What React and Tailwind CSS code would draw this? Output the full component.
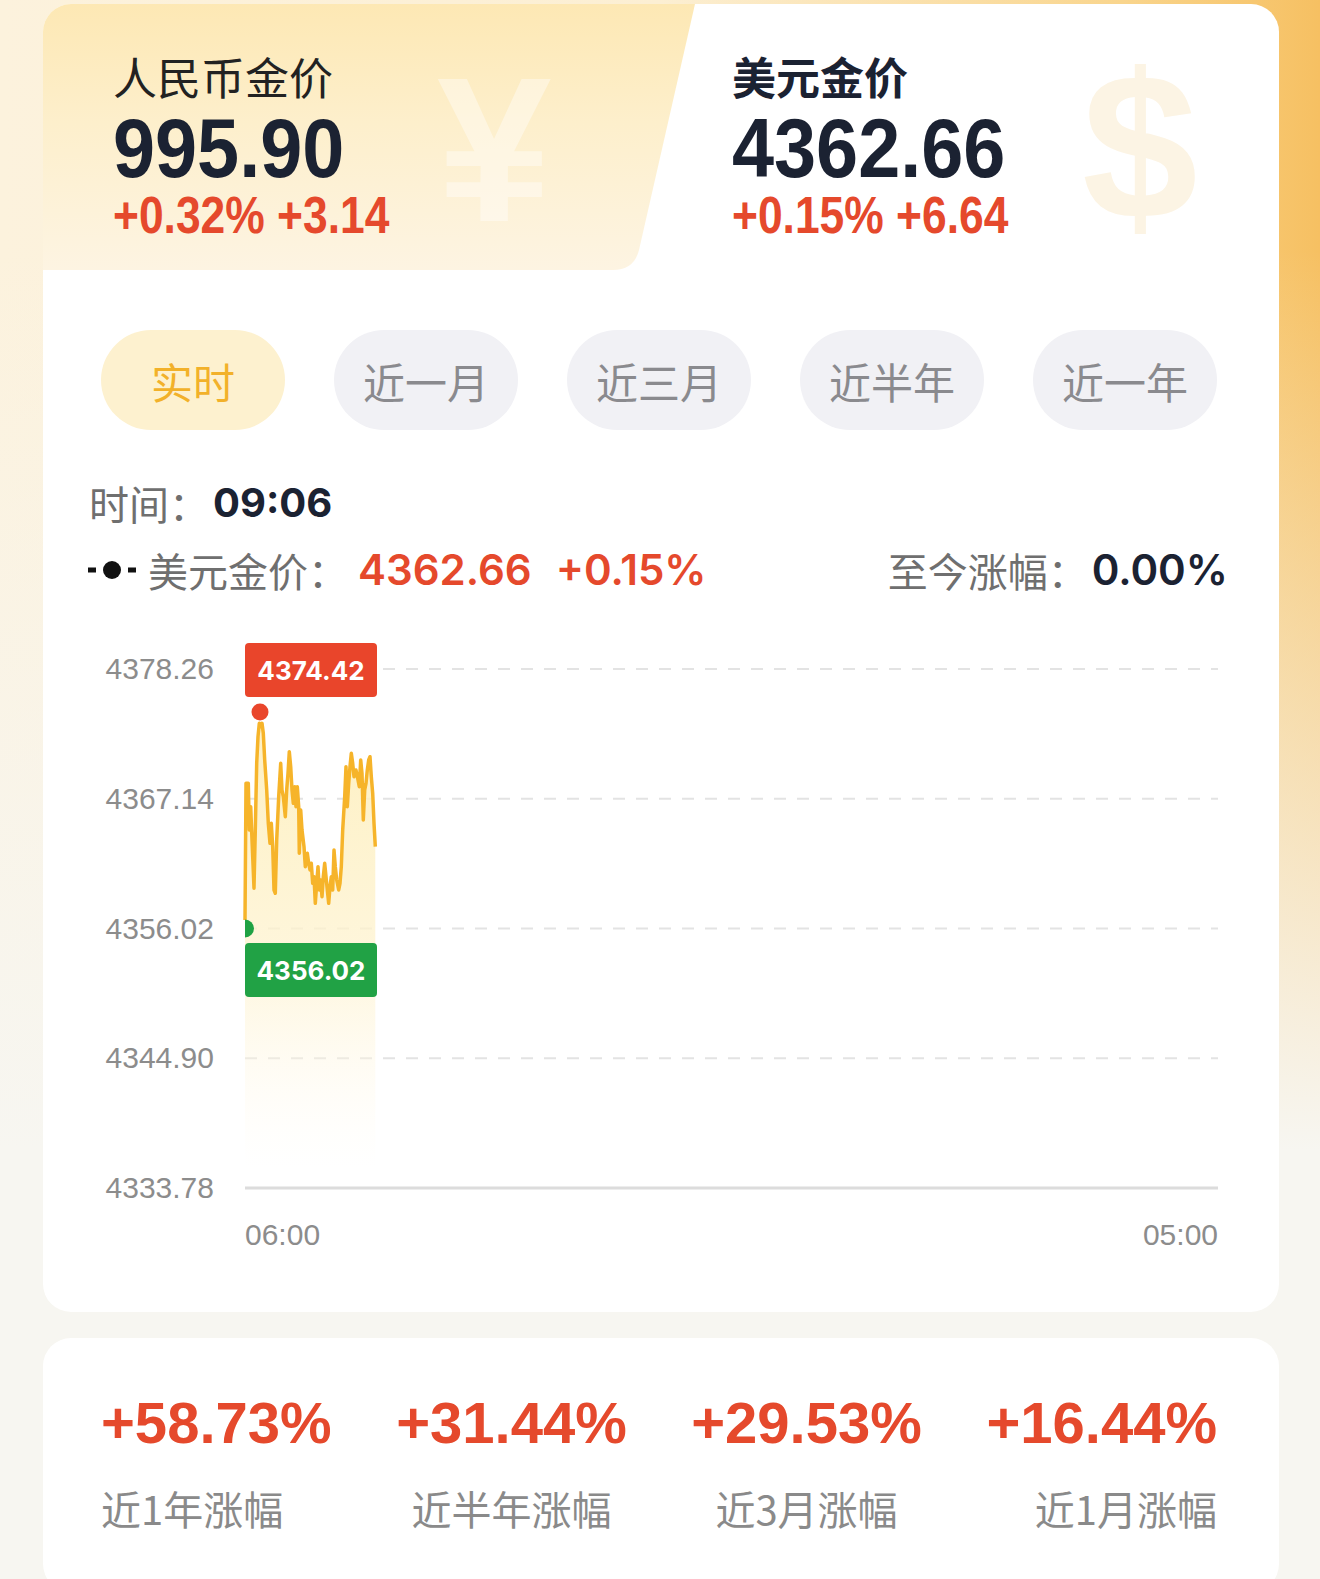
import React from "react";

const CJK = "font-['Noto_Sans_CJK_SC',sans-serif]";
const NUM = "font-['Liberation_Sans','Noto_Sans_CJK_SC',sans-serif]";
const INTER = "font-['Inter','Noto_Sans_CJK_SC',sans-serif]";
const LIB = "font-['Liberation_Sans',sans-serif]";

const pts = [
  [0, 251], [1, 114.3], [3.3, 114.3], [4.3, 161], [5.7, 137.7], [7, 171], [9, 219.3], [10.3, 161],
  [11.7, 94.3], [13, 67.7], [14.3, 54.3], [15.7, 57.7], [17, 54.3], [18.3, 64.3], [19.7, 91],
  [21.7, 121], [23.3, 154.3], [25, 174.3], [26.3, 154.3], [27.7, 177.7], [29, 221], [30.3, 224.3],
  [31.7, 171], [33.7, 127.7], [35.7, 94.3], [37, 121], [38.3, 127.7], [40.3, 147.7], [41.7, 121],
  [43, 104.3], [44.3, 82.7], [45.7, 97.7], [47, 121], [48.3, 134.3], [49.7, 117.7], [51, 137.7],
  [52.3, 117.7], [53.7, 137.7], [54.3, 184.3], [55.7, 141], [57, 161], [59, 177.7], [60.3, 197.7],
  [62.3, 184.3], [63.7, 194.3], [65, 201], [66.3, 194.3], [67.7, 214.3], [69, 207.7], [70.3, 234.3],
  [71.7, 214.3], [73, 197.7], [74.3, 221], [75.7, 211], [77, 227.7], [78.3, 207.7], [79.7, 194.3],
  [81, 207.7], [82.3, 221], [83.7, 234.3], [85, 217.7], [86.3, 207.7], [87.7, 221], [89, 181],
  [90.3, 197.7], [91.7, 211], [93.7, 221], [95, 214.3], [96.3, 197.7], [97.7, 161], [99.7, 127.7],
  [101, 97.7], [102.3, 137.7], [103.7, 114.3], [105, 97.7], [106.3, 84.3], [107.7, 94.3], [109, 107.7],
  [111, 101], [113, 111], [114.3, 117.7], [115.7, 91], [117, 104.3], [118.3, 151], [119.7, 121],
  [121, 114.3], [122.3, 101], [123.7, 91], [125, 87.7], [126.3, 107.7], [127.7, 124.3], [129, 154.3],
  [130.3, 177.7],
];

const linePath = pts.map((p, i) => `${i ? "L" : "M"}${p[0]},${p[1]}`).join(" ");
const fillPath = `${linePath} L130.3,519 L0,519 Z`;

function Chart() {
  const rows = [0, 129.75, 259.5, 389.25];
  return (
    <div className="relative h-[519px] w-[973px]">
      <svg className="absolute inset-0 overflow-visible" width="973" height="519" viewBox="0 0 973 519">
        <defs>
          <linearGradient id="fillg" x1="0" y1="40" x2="0" y2="500" gradientUnits="userSpaceOnUse">
            <stop offset="0" stopColor="#fdedb6" stopOpacity="0.85" />
            <stop offset="0.55" stopColor="#fef3d0" stopOpacity="0.75" />
            <stop offset="1" stopColor="#fffaf0" stopOpacity="0" />
          </linearGradient>
        </defs>
        {rows.map((y) => (
          <line key={y} x1="0" x2="973" y1={y} y2={y} stroke="#e3e3e3" strokeWidth="2" strokeDasharray="12 11" />
        ))}
        <line x1="0" x2="973" y1="519" y2="519" stroke="#dcdcdc" strokeWidth="3" />
        <path d={fillPath} fill="url(#fillg)" />
        <path d={linePath} fill="none" stroke="#f6b42a" strokeWidth="3.5" strokeLinejoin="round" />
        <circle cx="15" cy="43" r="8.5" fill="#e9462c" />
        <path d="M0,250.5 A9,9 0 0 1 0,268.5 Z" fill="#1fa244" />
      </svg>
      <div className={`absolute left-0 top-[-26px] flex h-[54px] w-[132px] items-center justify-center rounded-[4px] bg-[#e9452b] text-[26px] font-bold text-white ${INTER}`}>
        4374.42
      </div>
      <div className={`absolute left-0 top-[274px] flex h-[54px] w-[132px] items-center justify-center rounded-[4px] bg-[#21a245] text-[26px] font-bold text-white ${INTER}`}>
        4356.02
      </div>
    </div>
  );
}

function Price({ title, titleBold, value, change }) {
  return (
    <>
      <div className={`relative text-[44px] leading-[52px] text-[#1b2232] ${titleBold ? "font-bold" : "text-[#222]"} ${CJK}`}>{title}</div>
      <div className={`relative mt-[2px] origin-left scale-x-[0.9] whitespace-nowrap text-[84px] font-bold leading-[88px] text-[#1b2232] ${NUM}`}>
        {value}
      </div>
      <div className={`relative origin-left scale-x-[0.87] whitespace-nowrap text-[51px] font-bold leading-[48px] text-[#e5492c] ${NUM}`}>
        {change}
      </div>
    </>
  );
}

export default function App() {
  const tabs = ["实时", "近一月", "近三月", "近半年", "近一年"];
  const yLabels = ["4378.26", "4367.14", "4356.02", "4344.90", "4333.78"];
  const stats = [
    ["+58.73%", "近1年涨幅", "text-left"],
    ["+31.44%", "近半年涨幅", "text-center"],
    ["+29.53%", "近3月涨幅", "text-center"],
    ["+16.44%", "近1月涨幅", "text-right"],
  ];
  return (
    <div className="h-[1579px] w-[1320px] overflow-hidden bg-[linear-gradient(to_bottom,rgba(247,246,241,0)_0px,rgba(247,246,241,0)_250px,#f7f6f1_1150px),linear-gradient(90deg,#fcf2dd_0%,#fcefd3_50%,#f9d58d_85%,#f6c062_100%)] pt-[4px]">
      {/* main card */}
      <div className="mx-[43px] w-[1236px] overflow-hidden rounded-[28px] bg-white">
        {/* header */}
        <div className="flex h-[266px]">
          <div className="relative w-[652px] bg-[linear-gradient(to_bottom,#fde8b4_0%,#fdefcc_45%,#fdf4e2_100%)] pl-[70px] pt-[46px] [clip-path:path('M0_0H652L596_246Q591_266_570_266H0Z')]">
            <div className="absolute left-[394px] top-[26px] select-none font-['Liberation_Sans',sans-serif] text-[206px] font-bold leading-[240px] text-white/40">
              ¥
            </div>
            <Price title="人民币金价" value="995.90" change="+0.32% +3.14" />
          </div>
          <div className="relative flex-1 pl-[37px] pt-[46px]">
            <div className="absolute left-[387px] top-[18px] select-none font-['Liberation_Sans',sans-serif] text-[208px] font-bold leading-[250px] text-[#fcf4e4]">
              $
            </div>
            <Price title="美元金价" titleBold value="4362.66" change="+0.15% +6.64" />
          </div>
        </div>

        {/* tabs */}
        <div className="mt-[60px] flex justify-between pl-[58px] pr-[62px]">
          {tabs.map((t, i) => (
            <div
              key={t}
              className={`flex h-[100px] w-[184px] items-center justify-center rounded-full text-[42px] ${CJK} ${
                i === 0 ? "bg-[#fdf1cf] text-[#f2b12a]" : "bg-[#f1f1f5] text-[#8a8a8e]"
              }`}
            >
              {t}
            </div>
          ))}
        </div>

        {/* time */}
        <div className="mt-[49px] flex items-center pl-[46px] leading-[48px]">
          <span className={`text-[40px] text-[#6f6f6f] ${CJK}`}>时间：</span>
          <span className={`ml-[4px] text-[40px] font-bold text-[#1b2232] ${INTER}`}>09:06</span>
        </div>

        {/* legend */}
        <div className="mt-[19px] flex items-center justify-between pl-[45px] pr-[51px] leading-[48px]">
          <div className="flex items-center">
            <svg width="48" height="20" viewBox="0 0 48 20" className="mr-[12px]">
              <rect x="0" y="7.5" width="8" height="5" fill="#111" />
              <circle cx="24" cy="10" r="9" fill="#111" />
              <rect x="40" y="7.5" width="8" height="5" fill="#111" />
            </svg>
            <span className={`text-[40px] text-[#6f6f6f] ${CJK}`}>美元金价：</span>
            <span className={`ml-[10px] text-[42px] font-semibold text-[#e5492c] ${INTER}`}>4362.66</span>
            <span className={`ml-[24px] text-[42px] font-semibold text-[#e5492c] ${INTER}`}>+0.15%</span>
          </div>
          <div className="flex items-center">
            <span className={`text-[40px] text-[#6f6f6f] ${CJK}`}>至今涨幅：</span>
            <span className={`ml-[4px] text-[42px] font-semibold text-[#1b2232] ${INTER}`}>0.00%</span>
          </div>
        </div>

        {/* chart */}
        <div className="mt-[75px] flex">
          <div className="flex h-[519px] w-[171px] flex-col justify-between">
            {yLabels.map((l) => (
              <div key={l} className="flex h-0 items-center justify-end">
                <span className={`text-[30px] leading-[34px] text-[#8c8c8c] ${LIB}`}>{l}</span>
              </div>
            ))}
          </div>
          <div className="ml-[31px]">
            <Chart />
          </div>
        </div>

        {/* x labels */}
        <div className={`mt-[30px] flex justify-between pb-[60px] pl-[202px] pr-[61px] text-[30px] leading-[34px] text-[#8c8c8c] ${LIB}`}>
          <span>06:00</span>
          <span>05:00</span>
        </div>
      </div>

      {/* bottom card */}
      <div className="mx-[43px] mt-[26px] w-[1236px] rounded-[28px] bg-white pb-[60px] pl-[58px] pt-[53px]">
        <div className="grid grid-cols-[231px_231px_231px_231px] gap-x-[64px]">
          {stats.map(([v, l, a]) => (
            <div key={l} className={a}>
              <div className={`whitespace-nowrap text-[58px] font-bold leading-[64px] text-[#e5492c] ${NUM}`}>{v}</div>
              <div className={`mt-[29px] text-[40px] leading-[48px] text-[#8a8a8a] ${CJK}`}>{l}</div>
            </div>
          ))}
        </div>
      </div>
    </div>
  );
}
